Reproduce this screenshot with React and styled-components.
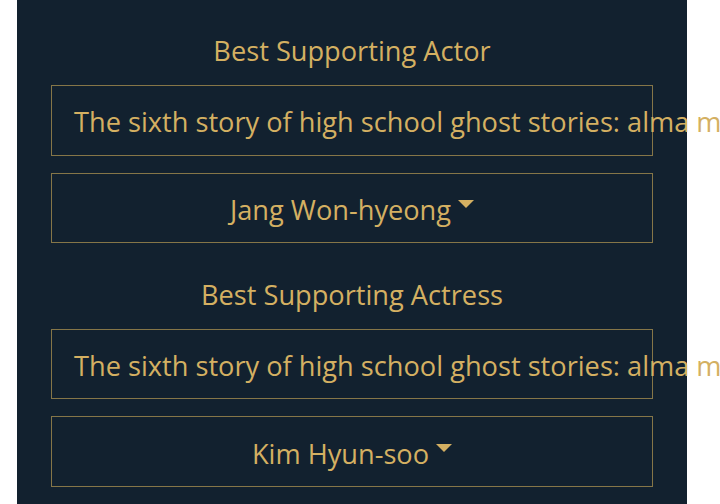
import React from "react";
import styled, { createGlobalStyle } from "styled-components";

const Global = createGlobalStyle`
  html, body {
    margin: 0;
    padding: 0;
    background: #ffffff;
    overflow: hidden;
    height: 504px;
  }
  body {
    font-family: "Open Sans", "DejaVu Sans", sans-serif;
  }
`;

const Panel = styled.div`
  margin-left: 17px;
  width: 670px;
  min-height: 504px;
  background: #12212f;
  padding: 31px 34px 20px;
  box-sizing: border-box;
  color: #d4b062;
  font-size: 27.2px;
  line-height: 40.8px;
`;

const Section = styled.section`
  display: flex;
  flex-direction: column;
  gap: 17px;
  & + & {
    margin-top: 31.5px;
  }
`;

const Title = styled.h2`
  margin: 0 0 -4px;
  font-size: 27.2px;
  font-weight: 400;
  line-height: 40.8px;
  text-align: center;
`;

const Box = styled.div`
  border: 1px solid #857648;
  padding: 16.5px 22px 11.5px;
  white-space: nowrap;
  overflow: visible;
  text-align: ${(p) => (p.$center ? "center" : "left")};
  width: 100%;
  box-sizing: border-box;
`;

const Caret = styled.span`
  display: inline-block;
  width: 0;
  height: 0;
  margin-left: 7px;
  vertical-align: 12px;
  border-top: 8px solid #d4b062;
  border-left: 8px solid transparent;
  border-right: 8px solid transparent;
`;

const data = [
  {
    title: "Best Supporting Actor",
    movie: "The sixth story of high school ghost stories: alma mater",
    person: "Jang Won-hyeong",
  },
  {
    title: "Best Supporting Actress",
    movie: "The sixth story of high school ghost stories: alma mater",
    person: "Kim Hyun-soo",
  },
];

export default function App() {
  return (
    <>
      <Global />
      <Panel>
        {data.map((d) => (
          <Section key={d.title}>
            <Title>{d.title}</Title>
            <Box>{d.movie}</Box>
            <Box $center>
              {d.person}
              <Caret />
            </Box>
          </Section>
        ))}
      </Panel>
    </>
  );
}
